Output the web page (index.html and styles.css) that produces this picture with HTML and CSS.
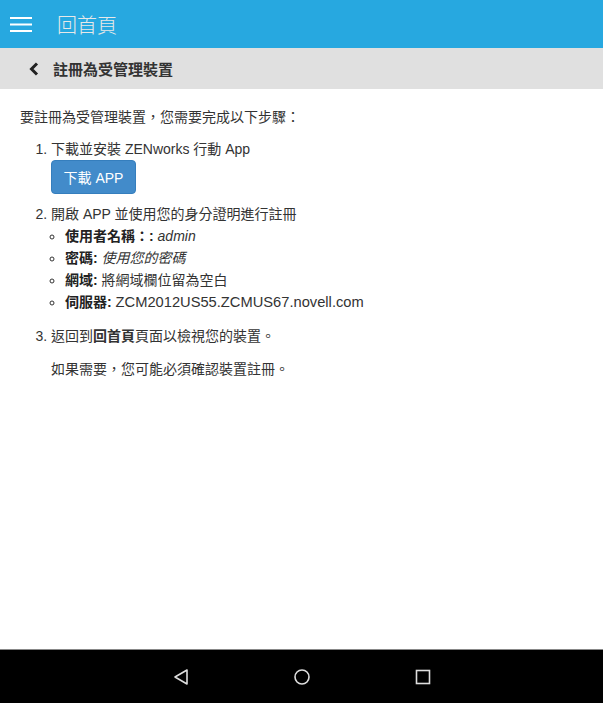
FILE: index.html
```html
<!DOCTYPE html>
<html lang="zh-Hant">
<head>
    <meta charset="UTF-8">
    <meta name="viewport" content="width=device-width, initial-scale=1.0">
    <title>回首頁</title>
    <link rel="stylesheet" href="styles.css">
</head>
<body>
    <div class="app">
        <header class="topbar">
            <span class="menu-icon">
                <svg width="22" height="16" viewBox="0 0 22 16">
                    <rect x="0" y="0" width="22" height="2" fill="#fff"/>
                    <rect x="0" y="6.5" width="22" height="2" fill="#fff"/>
                    <rect x="0" y="13" width="22" height="2" fill="#fff"/>
                </svg>
            </span>
            <span class="topbar-title">回首頁</span>
        </header>

        <div class="subbar">
            <span class="back-icon">
                <svg width="10" height="14" viewBox="0 0 10 14">
                    <polyline points="8,1.5 2.5,7 8,12.5" fill="none" stroke="#222" stroke-width="3"/>
                </svg>
            </span>
            <span class="subbar-title">註冊為受管理裝置</span>
        </div>

        <main class="content">
            <p class="intro">要註冊為受管理裝置，您需要完成以下步驟：</p>
            <ol class="steps">
                <li>
                    下載並安裝 ZENworks 行動 App
                    <div><button class="download-btn">下載 APP</button></div>
                </li>
                <li>
                    開啟 APP 並使用您的身分證明進行註冊
                    <ul class="creds">
                        <li><b>使用者名稱：:</b> <i>admin</i></li>
                        <li><b>密碼:</b> <i>使用您的密碼</i></li>
                        <li><b>網域:</b> 將網域欄位留為空白</li>
                        <li><b>伺服器:</b> <span class="server">ZCM2012US55.ZCMUS67.novell.com</span></li>
                    </ul>
                </li>
                <li class="last">
                    返回到<b>回首頁</b>頁面以檢視您的裝置。
                    <p class="note">如果需要，您可能必須確認裝置註冊。</p>
                </li>
            </ol>
        </main>

        <nav class="navbar">
            <svg width="18" height="18" viewBox="0 0 18 18">
                <polygon points="15,2 15,16 3,9" fill="none" stroke="#ddd" stroke-width="1.6" stroke-linejoin="round"/>
            </svg>
            <svg width="18" height="18" viewBox="0 0 18 18">
                <circle cx="9" cy="9" r="7" fill="none" stroke="#ddd" stroke-width="1.6"/>
            </svg>
            <svg width="18" height="18" viewBox="0 0 18 18">
                <rect x="2.5" y="2.5" width="13" height="13" fill="none" stroke="#ddd" stroke-width="1.6"/>
            </svg>
        </nav>
    </div>
</body>
</html>
```

FILE: styles.css
```css
* {
    margin: 0;
    padding: 0;
    box-sizing: border-box;
}

body {
    font-family: Arial, "Liberation Sans", "Noto Sans CJK TC", sans-serif;
    font-size: 14px;
    color: #333;
    background: #fff;
}

.app {
    width: 603px;
    height: 703px;
    display: flex;
    flex-direction: column;
}

.topbar {
    height: 48px;
    background-color: #27a8e0;
    display: flex;
    align-items: center;
    padding-left: 10px;
}

.menu-icon {
    display: flex;
    width: 22px;
    height: 16px;
    margin-top: 1px;
}

.topbar-title {
    margin-left: 25px;
    font-size: 20px;
    color: #e8e8e8;
    font-weight: 300;
}

.subbar {
    height: 41px;
    background-color: #e0e0e0;
    display: flex;
    align-items: center;
    padding-left: 29px;
}

.back-icon {
    display: flex;
    width: 10px;
    height: 14px;
}

.subbar-title {
    margin-left: 14px;
    font-size: 15px;
    font-weight: bold;
    color: #333;
}

.content {
    flex: 1;
    padding: 17px 20px 0 20px;
    line-height: 22px;
}

.intro {
    margin-bottom: 10px;
}

.steps {
    padding-left: 31px;
}

.download-btn {
    width: 85px;
    height: 34px;
    background-color: #428bca;
    border: 1px solid #357ebd;
    border-radius: 4px;
    color: #fff;
    font-family: inherit;
    font-size: 14px;
    margin-bottom: 9px;
}

.creds {
    list-style-type: circle;
    padding-left: 14px;
    margin-bottom: 12px;
}

.creds b {
    color: #222;
}

.server {
    font-size: 14.7px;
}

.note {
    margin-top: 11px;
}

.navbar {
    height: 54px;
    background-color: #000;
    border-top: 1px solid #888;
    display: flex;
    align-items: center;
    justify-content: center;
    gap: 103px;
}
```
